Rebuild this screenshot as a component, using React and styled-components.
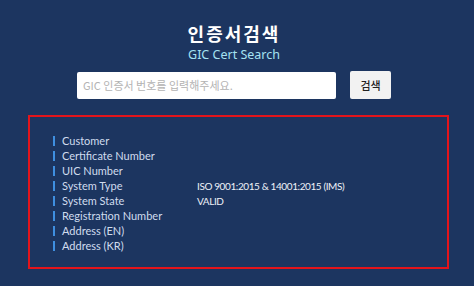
import React from "react";
import styled, { createGlobalStyle } from "styled-components";

const GlobalStyle = createGlobalStyle`
  html, body {
    margin: 0;
    padding: 0;
    background: #1c3560;
  }
  body {
    font-family: "Noto Sans", "Noto Sans CJK KR", sans-serif;
  }
`;

const Page = styled.div`
  width: 474px;
  height: 286px;
  box-sizing: border-box;
  padding-top: 20px;
  display: flex;
  flex-direction: column;
  align-items: center;
  background: #1c3560;
`;

const Header = styled.header`
  display: flex;
  flex-direction: column;
  align-items: center;
  margin-right: 6px;
`;

const Title = styled.h1`
  margin: 0;
  font-family: "Noto Sans CJK KR", sans-serif;
  font-size: 18px;
  font-weight: 700;
  letter-spacing: 2px;
  line-height: 26px;
  color: #ffffff;
`;

const Subtitle = styled.div`
  font-family: "Noto Sans", "Noto Sans CJK KR", sans-serif;
  font-size: 12.5px;
  line-height: 17px;
  color: #a6e2f2;
`;

const SearchRow = styled.form`
  margin-top: 8px;
  margin-right: 6px;
  display: flex;
  gap: 14px;
  align-items: center;
`;

const SearchInput = styled.input`
  width: 259px;
  height: 27px;
  box-sizing: border-box;
  border: none;
  border-radius: 2px;
  padding: 0 6px;
  font-family: "Noto Sans CJK KR", sans-serif;
  font-size: 11px;
  outline: none;
  &::placeholder {
    color: #b3b3b3;
  }
`;

const SearchButton = styled.button`
  width: 41px;
  height: 28px;
  border: none;
  border-radius: 2px;
  background: #f2f2f2;
  font-family: "Noto Sans CJK KR", sans-serif;
  font-size: 11px;
  font-weight: 500;
  color: #222;
  cursor: pointer;
`;

const ResultBox = styled.div`
  margin-top: 16px;
  margin-left: 3px;
  width: 421px;
  height: 154px;
  box-sizing: border-box;
  border: 2px solid #e3141b;
  padding: 16px 0 0 23px;
  display: flex;
  flex-direction: column;
`;

const Row = styled.div`
  display: grid;
  grid-template-columns: 144px 1fr;
  height: 15px;
  align-items: center;
`;

const Label = styled.div`
  display: flex;
  align-items: center;
  gap: 7px;
  font-family: Lato, "Liberation Sans", sans-serif;
  font-size: 11px;
  color: #d0dcee;
  &::before {
    content: "";
    width: 2px;
    height: 10px;
    background: #3f8fe0;
  }
`;

const Value = styled.div`
  font-family: Lato, "Liberation Sans", sans-serif;
  font-size: 10px;
  letter-spacing: -0.4px;
  color: #eef2f8;
`;

const rows = [
  ["Customer", ""],
  ["Certificate Number", ""],
  ["UIC Number", ""],
  ["System Type", "ISO 9001:2015 & 14001:2015 (IMS)"],
  ["System State", "VALID"],
  ["Registration Number", ""],
  ["Address (EN)", ""],
  ["Address (KR)", ""],
];

export default function App() {
  return (
    <>
      <GlobalStyle />
      <Page>
        <Header>
          <Title>인증서검색</Title>
          <Subtitle>GIC Cert Search</Subtitle>
        </Header>
        <SearchRow onSubmit={(e) => e.preventDefault()}>
          <SearchInput placeholder="GIC 인증서 번호를 입력해주세요." />
          <SearchButton type="submit">검색</SearchButton>
        </SearchRow>
        <ResultBox>
          {rows.map(([label, value]) => (
            <Row key={label}>
              <Label>{label}</Label>
              <Value>{value}</Value>
            </Row>
          ))}
        </ResultBox>
      </Page>
    </>
  );
}
